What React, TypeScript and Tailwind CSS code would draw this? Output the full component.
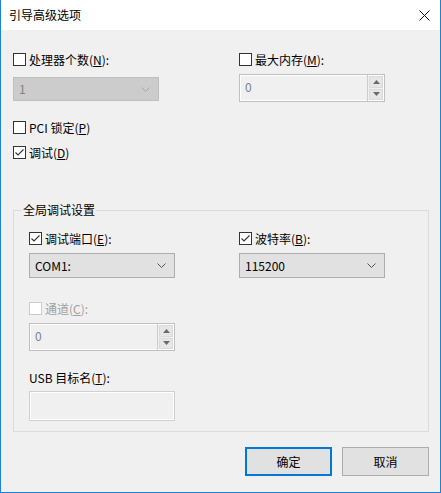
import React from 'react'

const font = { fontFamily: '"Microsoft YaHei UI", "Noto Sans CJK SC", "Noto Sans", sans-serif' }

function Box({ checked, disabled }: { checked?: boolean; disabled?: boolean }) {
  return (
    <span
      className={
        'w-[13px] h-[13px] shrink-0 border bg-white flex items-center justify-center ' +
        (disabled ? 'border-[#cccccc]' : 'border-[#333333]')
      }
    >
      {checked && (
        <svg width="11" height="11" viewBox="0 0 11 11">
          <path d="M1.5 5.5 L4 8 L9.5 2.5" fill="none" stroke="#333333" strokeWidth="1.1" />
        </svg>
      )}
    </span>
  )
}

function Check({ checked, disabled, children }: { checked?: boolean; disabled?: boolean; children: React.ReactNode }) {
  return (
    <div className="flex items-center h-[13px] gap-[3px]">
      <Box checked={checked} disabled={disabled} />
      <span className={'text-[12px] leading-[13px] whitespace-nowrap ' + (disabled ? 'text-[#a0a0a0]' : 'text-black')}>
        {children}
      </span>
    </div>
  )
}

function Chevron({ color }: { color: string }) {
  return (
    <svg width="9" height="5" viewBox="0 0 9 5">
      <path d="M0.5 0.5 L4.5 4.5 L8.5 0.5" fill="none" stroke={color} strokeWidth="1" />
    </svg>
  )
}

function Combo({ value, disabled }: { value: string; disabled?: boolean }) {
  return (
    <div
      className={
        'w-[146px] flex items-center justify-between pl-[5px] pr-[8px] border ' +
        (disabled ? 'h-[24px] bg-[#cccccc] border-[#bfbfbf] text-[#838383]' : 'h-[25px] bg-[#e1e1e1] border-[#adadad] text-black')
      }
    >
      <span className="text-[12px]">{value}</span>
      <Chevron color={disabled ? '#a6a6a6' : '#555555'} />
    </div>
  )
}

function Spin() {
  return (
    <div className="w-[146px] h-[28px] flex border border-[#bfbfbf] bg-[#f0f0f0] shadow-[inset_0_0_0_1px_#ffffff]">
      <span className="flex-1 pl-[5px] pt-[3px] text-[12px] text-[#7a8290]">0</span>
      <div className="w-[17px] flex flex-col gap-[1px] p-[1px] border-l border-[#cccccc]">
        <div className="flex-1 bg-[#e6e6e6] border border-[#dadada] flex items-center justify-center">
          <svg width="7" height="4" viewBox="0 0 7 4">
            <path d="M0 4 L3.5 0 L7 4 Z" fill="#6a6a6a" />
          </svg>
        </div>
        <div className="flex-1 bg-[#e6e6e6] border border-[#dadada] flex items-center justify-center">
          <svg width="7" height="4" viewBox="0 0 7 4">
            <path d="M0 0 L3.5 4 L7 0 Z" fill="#6a6a6a" />
          </svg>
        </div>
      </div>
    </div>
  )
}

export default function App() {
  return (
    <div style={font} className="w-[441px] h-[493px] flex flex-col bg-[#f0f0f0] border-x border-b border-[#1883d7] text-black">
      {/* title bar */}
      <div className="h-[30px] shrink-0 bg-white flex items-center justify-between pl-[8px] pr-[10px]">
        <span className="text-[12px]">引导高级选项</span>
        <svg width="11" height="11" viewBox="0 0 11 11">
          <path d="M0.5 0.5 L10.5 10.5 M10.5 0.5 L0.5 10.5" stroke="#111111" strokeWidth="1" />
        </svg>
      </div>

      <div className="flex flex-col pl-[12px] pr-[11px]">
        <div className="mt-[23px] grid grid-cols-[226px_1fr]">
          <div className="flex flex-col">
            <Check>处理器个数(<u>N</u>):</Check>
            <div className="mt-[11px]">
              <Combo value="1" disabled />
            </div>
          </div>
          <div className="flex flex-col">
            <Check>最大内存(<u>M</u>):</Check>
            <div className="mt-[8px]">
              <Spin />
            </div>
          </div>
        </div>

        <div className="mt-[19px]">
          <Check>PCI 锁定(<u>P</u>)</Check>
        </div>
        <div className="mt-[12px]">
          <Check checked>调试(<u>D</u>)</Check>
        </div>

        {/* group box */}
        <div className="mt-[51px] w-[416px] border border-[#dcdcdc] flex flex-col pl-[15px] pb-[10px]">
          <div className="-mt-[9px] h-[16px] -ml-[7px] self-start px-[1px] bg-[#f0f0f0] text-[12px] leading-[16px]">
            全局调试设置
          </div>
          <div className="mt-[14px] grid grid-cols-[210px_1fr]">
            <div className="flex flex-col">
              <Check checked>调试端口(<u>E</u>):</Check>
              <div className="mt-[8px]">
                <Combo value="COM1:" />
              </div>
            </div>
            <div className="flex flex-col">
              <Check checked>波特率(<u>B</u>):</Check>
              <div className="mt-[8px]">
                <Combo value="115200" />
              </div>
            </div>
          </div>

          <div className="mt-[24px]">
            <Check disabled>通道(<u>C</u>):</Check>
          </div>
          <div className="mt-[8px]">
            <Spin />
          </div>

          <div className="mt-[20px] h-[13px] flex items-center text-[12px] leading-[13px]">
            USB 目标名(<u>T</u>):
          </div>
          <div className="mt-[7px] w-[146px] h-[30px] border border-[#d0d0d0] bg-[#f0f0f0] shadow-[inset_0_0_0_1px_#ffffff]" />
        </div>

        <div className="mt-[15px] w-[416px] flex justify-end gap-[10px]">
          <button className="w-[87px] h-[29px] bg-[#e1e1e1] border-2 border-[#0078d7] text-[12px]">确定</button>
          <button className="w-[87px] h-[29px] bg-[#e1e1e1] border border-[#adadad] text-[12px]">取消</button>
        </div>
      </div>
    </div>
  )
}
